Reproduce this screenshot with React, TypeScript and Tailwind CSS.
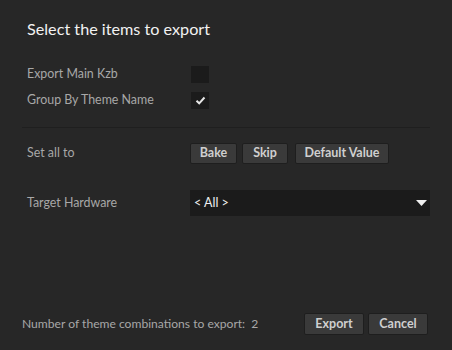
import { useState } from 'react';

const font = { fontFamily: 'Lato, "Noto Sans", sans-serif' };

function Check({ checked, onToggle }: { checked: boolean; onToggle: () => void }) {
  return (
    <button
      onClick={onToggle}
      className="flex h-[17px] w-[18px] items-center justify-center bg-[#1b1b1b]"
    >
      {checked && (
        <svg width="11" height="9" viewBox="0 0 11 9">
          <path d="M1.5 4.8 L4.2 7.3 L9.5 1.5" stroke="#e6e6e6" strokeWidth="2" fill="none" />
        </svg>
      )}
    </button>
  );
}

function Btn({ label, w }: { label: string; w: string }) {
  return (
    <button
      className={`${w} h-[21px] rounded-[2px] border border-[#1e1e1e] bg-[#3a3a3a] text-[12.5px] font-bold text-[#cfcfcf]`}
    >
      {label}
    </button>
  );
}

export default function App() {
  const [mainKzb, setMainKzb] = useState(false);
  const [groupByTheme, setGroupByTheme] = useState(true);

  return (
    <div className="flex h-[350px] w-[452px] flex-col bg-[#272727]" style={font}>
      <h1 className="ml-[27px] mt-[17px] text-[16.2px] leading-[24px] text-[#f2f2f2]">
        Select the items to export
      </h1>

      <div className="mt-[25px] flex h-[17px] items-center pl-[27px]">
        <span className="w-[164px] text-[12.4px] text-[#a8a8a8]">Export Main Kzb</span>
        <Check checked={mainKzb} onToggle={() => setMainKzb(v => !v)} />
      </div>
      <div className="mt-[9px] flex h-[17px] items-center pl-[27px]">
        <span className="w-[164px] text-[12.4px] text-[#a8a8a8]">Group By Theme Name</span>
        <Check checked={groupByTheme} onToggle={() => setGroupByTheme(v => !v)} />
      </div>

      <div className="mx-[22px] mt-[18px] h-px bg-[#1f1f1f]" />

      <div className="mt-[15px] flex h-[21px] items-center pl-[27px]">
        <span className="w-[163px] text-[12.4px] text-[#a8a8a8]">Set all to</span>
        <div className="flex gap-[5px]">
          <Btn label="Bake" w="w-[47px]" />
          <Btn label="Skip" w="w-[46px]" />
          <Btn label="Default Value" w="w-[94px] ml-[2px]" />
        </div>
      </div>

      <div className="mt-[26px] flex h-[26px] items-center pl-[27px]">
        <span className="w-[163px] text-[12.4px] text-[#a8a8a8]">Target Hardware</span>
        <div className="flex h-[26px] w-[240px] items-center justify-between bg-[#1b1b1b] pl-[4px] pr-[3px]">
          <span className="text-[12.5px] text-[#f0f0f0]">&lt; All &gt;</span>
          <svg width="11" height="6" viewBox="0 0 11 6">
            <path d="M0 0 H11 L5.5 6 Z" fill="#f0f0f0" />
          </svg>
        </div>
      </div>

      <div className="mt-auto mb-[15px] flex h-[22px] items-center pl-[22px] pr-[24px]">
        <span className="flex-1 text-[12.1px] text-[#a8a8a8]">Number of theme combinations to export:&nbsp; 2</span>
        <div className="flex gap-[4px]">
          <Btn label="Export" w="w-[60px] h-[22px]" />
          <Btn label="Cancel" w="w-[60px] h-[22px]" />
        </div>
      </div>
    </div>
  );
}
